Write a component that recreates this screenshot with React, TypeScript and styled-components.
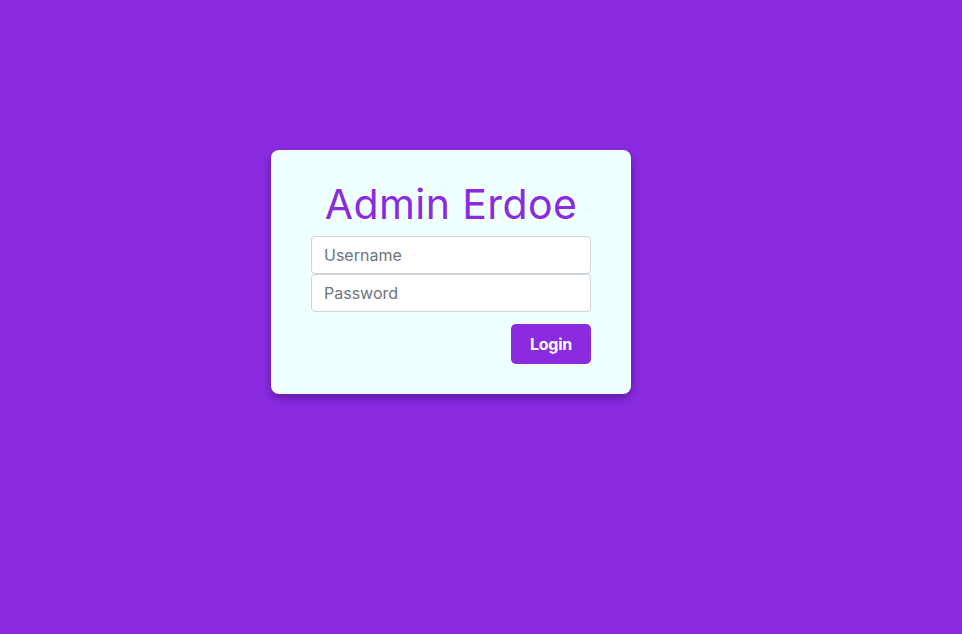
import React from "react";
import styled, { createGlobalStyle } from "styled-components";

const Global = createGlobalStyle`
  html, body { margin: 0; padding: 0; }
  body {
    background: #8a2be2;
    font-family: "Inter", "Noto Sans", sans-serif;
  }
`;

const Page = styled.div`
  width: 962px;
  height: 634px;
  display: flex;
  justify-content: flex-start;
  align-items: flex-start;
  padding: 150px 0 0 271px;
  box-sizing: border-box;
`;

const Card = styled.form`
  width: 360px;
  height: 244px;
  box-sizing: border-box;
  background: #f0ffff;
  border-radius: 8px;
  box-shadow: 0 4px 10px rgba(40, 0, 80, 0.45);
  padding: 30px 40px 30px;
  display: flex;
  flex-direction: column;
`;

const Title = styled.h1`
  margin: 0 0 8px;
  text-align: center;
  font-weight: 400;
  font-size: 41px;
  line-height: 48px;
  color: #8a2be2;
  letter-spacing: 0.4px;
`;

const Input = styled.input`
  box-sizing: border-box;
  width: 280px;
  height: 38px;
  border: 1px solid #ced4da;
  border-radius: 4px;
  background: #fff;
  padding: 0 12px;
  font-family: inherit;
  font-size: 16px;
  color: #495057;
  &::placeholder { color: #6c757d; }
`;

const Actions = styled.div`
  display: flex;
  justify-content: flex-end;
  margin-top: 12px;
`;

const Button = styled.button`
  width: 80px;
  height: 40px;
  border: none;
  border-radius: 5px;
  background: #8a2be2;
  color: #fff;
  font-family: inherit;
  font-weight: 700;
  font-size: 16px;
  letter-spacing: -0.3px;
  cursor: pointer;
`;

export default function App() {
  return (
    <>
      <Global />
      <Page>
        <Card onSubmit={(e) => e.preventDefault()}>
          <Title>Admin Erdoe</Title>
          <Input placeholder="Username" />
          <Input type="password" placeholder="Password" />
          <Actions>
            <Button type="submit">Login</Button>
          </Actions>
        </Card>
      </Page>
    </>
  );
}
